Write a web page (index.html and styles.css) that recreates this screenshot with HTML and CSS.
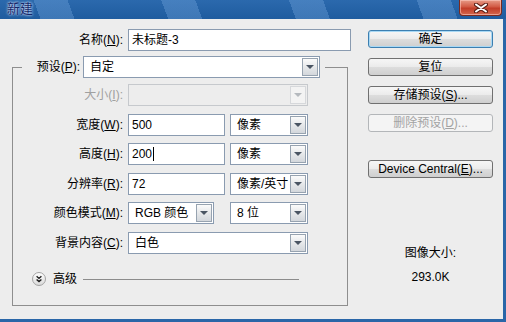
FILE: index.html
```html
<!DOCTYPE html>
<html lang="zh-CN">
<head>
    <meta charset="UTF-8">
    <title>新建</title>
    <link rel="stylesheet" href="styles.css">
</head>
<body>
    <div class="window">
        <div class="titlebar">
            <span class="title">新建</span>
            <button class="close" aria-label="关闭">
                <svg width="14" height="10" viewBox="0 0 14 10">
                    <path d="M2 1.5 L12 8.5 M12 1.5 L2 8.5" stroke="#5b1f16" stroke-width="4" stroke-linecap="round"/>
                    <path d="M2 1.5 L12 8.5 M12 1.5 L2 8.5" stroke="#fff" stroke-width="2" stroke-linecap="round"/>
                </svg>
            </button>
        </div>

        <div class="dialog">
            <div class="main">
                <div class="name-row">
                    <label class="label">名称(<u>N</u>):</label>
                    <div class="textbox">未标题-3</div>
                </div>

                <fieldset class="group">
                    <legend class="preset">
                        <span class="label preset-label">预设(<u>P</u>):</span>
                        <div class="select preset-select">
                            <span class="value">自定</span>
                            <span class="arrow"></span>
                        </div>
                    </legend>

                    <div class="rows">
                        <span class="label disabled">大小(<u>I</u>):</span>
                        <div class="select disabled">
                            <span class="value"></span>
                            <span class="arrow"></span>
                        </div>

                        <span class="label">宽度(<u>W</u>):</span>
                        <div class="pair">
                            <div class="textbox num">500</div>
                            <div class="select unit">
                                <span class="value">像素</span>
                                <span class="arrow"></span>
                            </div>
                        </div>

                        <span class="label">高度(<u>H</u>):</span>
                        <div class="pair">
                            <div class="textbox num">200<span class="caret"></span></div>
                            <div class="select unit">
                                <span class="value">像素</span>
                                <span class="arrow"></span>
                            </div>
                        </div>

                        <span class="label">分辨率(<u>R</u>):</span>
                        <div class="pair">
                            <div class="textbox num">72</div>
                            <div class="select unit">
                                <span class="value">像素/英寸</span>
                                <span class="arrow"></span>
                            </div>
                        </div>

                        <span class="label">颜色模式(<u>M</u>):</span>
                        <div class="pair">
                            <div class="select mode">
                                <span class="value">RGB 颜色</span>
                                <span class="arrow"></span>
                            </div>
                            <div class="select unit">
                                <span class="value">8 位</span>
                                <span class="arrow"></span>
                            </div>
                        </div>

                        <span class="label">背景内容(<u>C</u>):</span>
                        <div class="select">
                            <span class="value">白色</span>
                            <span class="arrow"></span>
                        </div>
                    </div>

                    <div class="advanced">
                        <svg width="14" height="14" viewBox="0 0 14 14">
                            <defs>
                                <linearGradient id="adv" x1="0" y1="0" x2="0" y2="1">
                                    <stop offset="0" stop-color="#ffffff"/>
                                    <stop offset="1" stop-color="#d9d9d9"/>
                                </linearGradient>
                            </defs>
                            <circle cx="7" cy="7" r="6.5" fill="url(#adv)" stroke="#a3a3a3"/>
                            <path d="M4.6 4.2 L7 6.4 L9.4 4.2 M4.6 7.4 L7 9.6 L9.4 7.4" fill="none" stroke="#1e1e1e" stroke-width="1.4"/>
                        </svg>
                        <span class="adv-text">高级</span>
                        <span class="adv-line"></span>
                    </div>
                </fieldset>
            </div>

            <div class="side">
                <button class="btn default">确定</button>
                <button class="btn">复位</button>
                <button class="btn">存储预设(<u>S</u>)...</button>
                <button class="btn" disabled>删除预设(<u>D</u>)...</button>
                <button class="btn device">Device Central(<u>E</u>)...</button>

                <div class="image-size">
                    <p>图像大小:</p>
                    <p>293.0K</p>
                </div>
            </div>
        </div>
    </div>
</body>
</html>
```

FILE: styles.css
```css
/* Dialog "新建" */
* {
    box-sizing: border-box;
}

body {
    margin: 0;
    font-family: "Liberation Sans", "Noto Sans CJK SC", sans-serif;
    font-size: 12px;
    color: #000;
    background: #ededed;
}

.window {
    width: 506px;
    height: 322px;
    display: flex;
    flex-direction: column;
    background: #2a66a8;
}

/* Title bar */
.titlebar {
    height: 19px;
    display: flex;
    justify-content: space-between;
    align-items: flex-start;
    padding: 0 4px 0 7px;
    background:
        repeating-linear-gradient(70deg, rgba(255, 255, 255, 0) 0 38px, rgba(120, 170, 225, 0.35) 38px 70px, rgba(255, 255, 255, 0) 70px 120px),
        linear-gradient(#2b69ad, #1f5c9f);
}

.title {
    font-size: 13px;
    line-height: 18px;
    color: #15286a;
    text-shadow: 0 0 2px #d8e6ff, 0 0 3px #b9cff0;
}

.close {
    width: 43px;
    height: 16px;
    padding: 0;
    display: flex;
    align-items: center;
    justify-content: center;
    border: 1px solid #7a2a1f;
    border-top: none;
    border-radius: 0 0 4px 4px;
    background: linear-gradient(#e79b87, #d25a44 45%, #c23d28 55%, #d3674e);
    box-shadow: inset 0 0 0 1px rgba(255, 210, 200, 0.55);
}

/* Dialog body */
.dialog {
    flex: 1;
    display: flex;
    margin: 0 3px 3px 0;
    background: #ededed;
}

.main {
    width: 360px;
}

.label {
    text-align: right;
    line-height: 22px;
    white-space: nowrap;
}

.label.disabled {
    color: #a0a0a0;
}

.name-row {
    display: grid;
    grid-template-columns: 123px 223px;
    column-gap: 5px;
    margin-top: 10px;
}

.textbox {
    height: 22px;
    border: 1px solid #8a9bb0;
    background: #fff;
    padding: 0 3px;
    line-height: 20px;
    white-space: nowrap;
}

.caret {
    display: inline-block;
    width: 1px;
    height: 14px;
    margin-left: 1px;
    background: #000;
    vertical-align: -3px;
}

/* Group box */
.group {
    width: 336px;
    margin: 5px 0 0 12px;
    padding: 6px 9px 19px 9px;
    border: 1px solid #8e8e8e;
    min-width: 0;
}

.preset {
    display: flex;
    align-items: center;
    gap: 3px;
    padding: 0 5px 0 0;
}

.preset-label {
    width: 58px;
}

.select {
    height: 22px;
    display: flex;
    border: 1px solid #8a9bb0;
    background: #fff;
}

.select .value {
    flex: 1;
    padding-left: 6px;
    line-height: 20px;
    white-space: nowrap;
    overflow: hidden;
}

.select .arrow {
    width: 16px;
    margin: 1px 1px 1px 0;
    display: flex;
    align-items: center;
    justify-content: center;
    border: 1px solid #97a3b0;
    background: linear-gradient(#fbfbfb, #e6e8ea 50%, #d3d7dc);
}

.select .arrow::after {
    content: "";
    width: 0;
    height: 0;
    border-top: 4px solid #4a5563;
    border-left: 4px solid transparent;
    border-right: 4px solid transparent;
}

.select.disabled {
    border-color: #c6c9cd;
    background: #ededed;
}

.select.disabled .arrow {
    border-color: #d6d8db;
    background: #f3f3f3;
}

.select.disabled .arrow::after {
    border-top-color: #b5b9be;
}

.preset-select {
    width: 237px;
}

.rows {
    display: grid;
    grid-template-columns: 101px 180px;
    column-gap: 5px;
    row-gap: 7.5px;
}

.pair {
    display: flex;
    justify-content: space-between;
}

.num {
    width: 97px;
}

.unit {
    width: 78px;
}

.mode {
    width: 86px;
}

/* Advanced */
.advanced {
    display: flex;
    align-items: center;
    height: 14px;
    margin-top: 18.5px;
    padding-left: 10px;
}

.adv-text {
    margin-left: 7px;
    line-height: 14px;
}

.adv-line {
    width: 216px;
    height: 1px;
    margin-left: 6px;
    background: #8c8c8c;
}

/* Buttons column */
.side {
    width: 125px;
    margin-left: 8px;
    padding-top: 11px;
    display: flex;
    flex-direction: column;
}

.btn {
    height: 18px;
    margin-bottom: 10px;
    padding: 0;
    font-family: inherit;
    font-size: 12px;
    line-height: 16px;
    color: #000;
    border: 1px solid #707070;
    border-radius: 3px;
    background: linear-gradient(#f6f6f6, #ebebeb 50%, #dddddd 51%, #cfcfcf);
}

.btn.default {
    border-color: #3c7fb1;
    box-shadow: inset 0 0 0 1px #a8d8f4;
}

.btn:disabled {
    color: #a3a3a3;
    border-color: #b3b6b9;
    background: #f4f4f4;
}

.btn.device {
    margin-top: 18px;
}

.image-size {
    margin-top: 57px;
    text-align: center;
}

.image-size p {
    margin: 0 0 8px;
    line-height: 16px;
}
```
